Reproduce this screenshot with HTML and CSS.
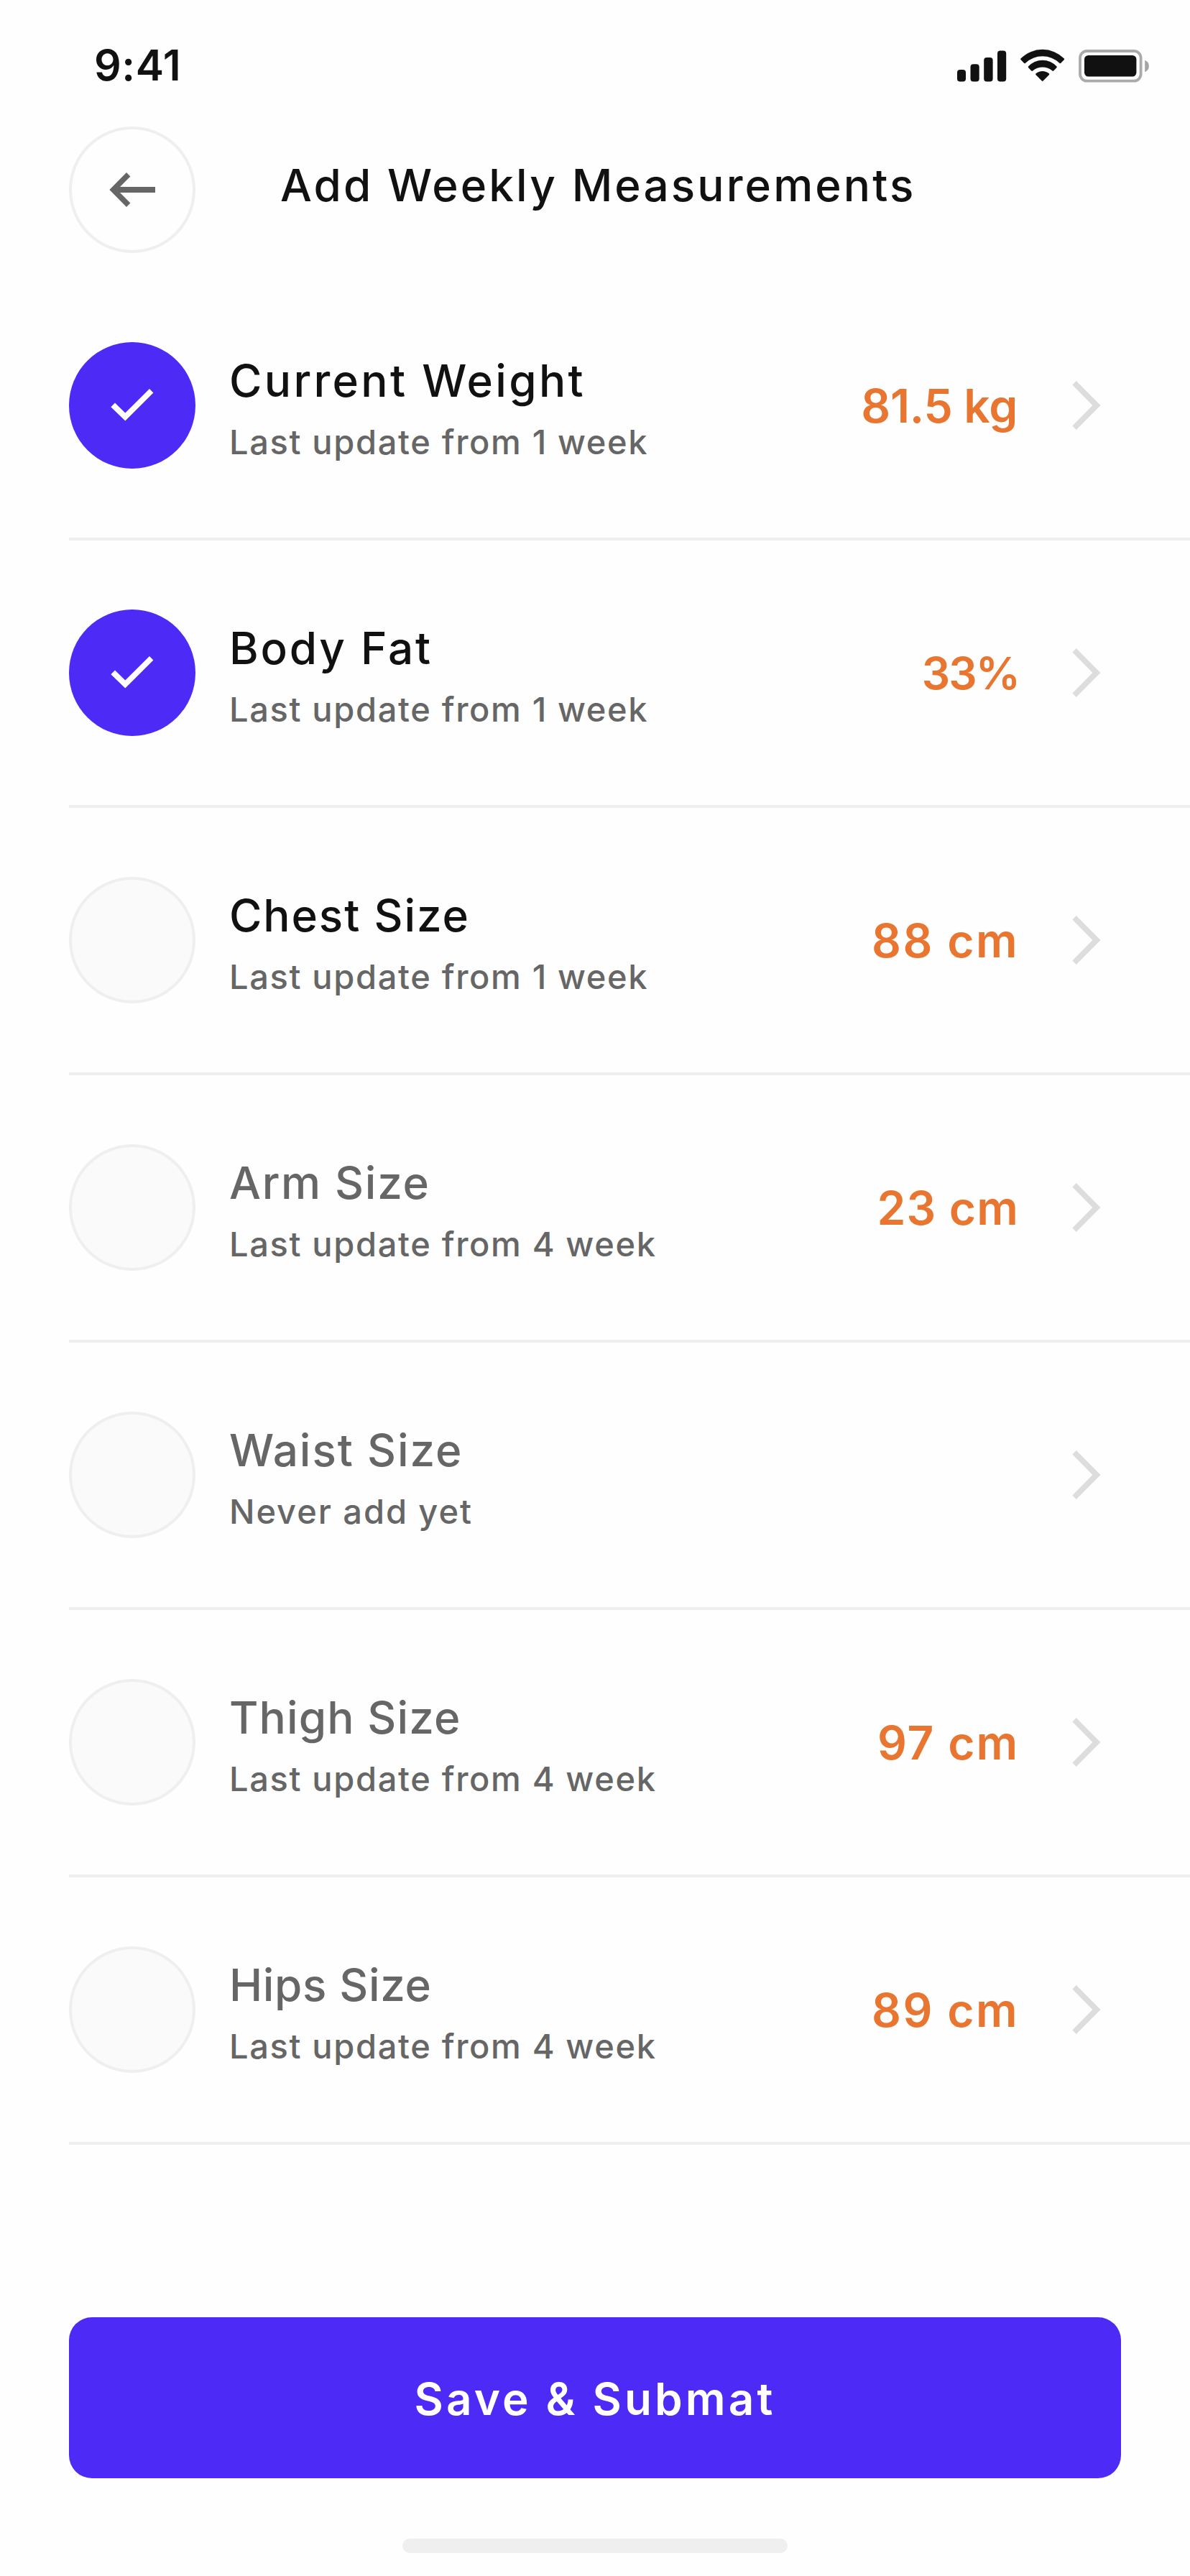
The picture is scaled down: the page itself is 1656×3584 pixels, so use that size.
FILE: index.html
```html
<!DOCTYPE html>
<html lang="en">
<head>
<meta charset="utf-8">
<title>Add Weekly Measurements</title>
<link rel="stylesheet" href="styles.css">
</head>
<body>
<svg class="sprite" aria-hidden="true">
  <symbol id="chevron" viewBox="0 0 40 68"><path d="M5.7 0 39.6 34 5.7 68 .3 62.6 28.4 34 .3 5.4z"/></symbol>
  <symbol id="check" viewBox="0 0 60 46"><path d="M.3 25.3 6 19.6 20.3 33.6 54 0 59.4 5.4 20.3 44.6z"/></symbol>
</svg>
<div class="screen">
  <div class="status">
    <span class="status__time">9:41</span>
    <svg class="status__icons" viewBox="0 0 268 48">
      <g fill="#111">
        <rect x="0" y="29" width="12" height="16.6" rx="4"/>
        <rect x="18.5" y="21.2" width="12.2" height="24.4" rx="4"/>
        <rect x="37.2" y="12" width="12.4" height="33.6" rx="4"/>
        <rect x="56" y="2.4" width="12.2" height="43.2" rx="4"/>
        <path d="M88.4 13.6Q88 14.3 88.5 15L93 19.8Q94 20.7 95 19.7A34.3 34.3 0 0 1 142.4 19.7Q143.4 20.7 144.3 19.8L148.9 15Q149.4 14.3 148.9 13.6A42.3 42.3 0 0 0 88.4 13.6z"/>
        <path d="M98.9 24.6Q98.5 25.3 99 25.9L103.3 30.6Q104.2 31.3 105.1 30.6A21.3 21.3 0 0 1 132.5 30.6Q133.3 31.3 134.2 30.6L138.5 25.9Q139 25.3 138.6 24.6A26.6 26.6 0 0 0 98.9 24.6z"/>
        <path d="M109.3 34.6Q108.9 35.3 109.4 35.9L117.8 44.6Q118.7 45.4 119.6 44.6L128 35.9Q128.5 35.3 128.1 34.6A14.3 14.3 0 0 0 109.3 34.6z"/>
        <rect x="177" y="9" width="72.4" height="29.6" rx="5.5"/>
      </g>
      <rect x="171" y="3" width="84.6" height="41.6" rx="9.5" fill="none" stroke="#aaa" stroke-width="3.8"/>
      <path d="M261.2 15.8Q266.9 18.4 266.9 24T261.2 32.2z" fill="#a5a5a5"/>
    </svg>
  </div>

  <header class="header">
    <div class="back">
      <svg class="back__icon" viewBox="0 0 64 50"><path d="M.3 25 24 1 29.4 6.4 15 21H64V29H15L29.4 43.6 24 49z"/></svg>
    </div>
    <h1 class="header__title">Add Weekly Measurements</h1>
  </header>

  <main class="list">
    <section class="row row--weight">
      <div class="mark mark--done"><svg class="mark__check"><use href="#check"/></svg></div>
      <div class="info"><h2 class="title">Current Weight</h2><p class="note">Last update from 1 week</p></div>
      <span class="value">81.5 kg</span>
      <svg class="chevron"><use href="#chevron"/></svg>
    </section>
    <section class="row row--fat">
      <div class="mark mark--done"><svg class="mark__check"><use href="#check"/></svg></div>
      <div class="info"><h2 class="title">Body Fat</h2><p class="note">Last update from 1 week</p></div>
      <span class="value">33%</span>
      <svg class="chevron"><use href="#chevron"/></svg>
    </section>
    <section class="row row--chest">
      <div class="mark"></div>
      <div class="info"><h2 class="title">Chest Size</h2><p class="note">Last update from 1 week</p></div>
      <span class="value">88 cm</span>
      <svg class="chevron"><use href="#chevron"/></svg>
    </section>
    <section class="row row--muted row--arm">
      <div class="mark"></div>
      <div class="info"><h2 class="title">Arm Size</h2><p class="note">Last update from 4 week</p></div>
      <span class="value">23 cm</span>
      <svg class="chevron"><use href="#chevron"/></svg>
    </section>
    <section class="row row--muted row--waist">
      <div class="mark"></div>
      <div class="info"><h2 class="title">Waist Size</h2><p class="note">Never add yet</p></div>
      <svg class="chevron"><use href="#chevron"/></svg>
    </section>
    <section class="row row--muted row--thigh">
      <div class="mark"></div>
      <div class="info"><h2 class="title">Thigh Size</h2><p class="note">Last update from 4 week</p></div>
      <span class="value">97 cm</span>
      <svg class="chevron"><use href="#chevron"/></svg>
    </section>
    <section class="row row--muted row--hips">
      <div class="mark"></div>
      <div class="info"><h2 class="title">Hips Size</h2><p class="note">Last update from 4 week</p></div>
      <span class="value">89 cm</span>
      <svg class="chevron"><use href="#chevron"/></svg>
    </section>
  </main>

  <button class="submit" type="button">Save &amp; Submat</button>
  <div class="home"></div>
</div>
</body>
</html>
```
FILE: styles.css
```css
* { box-sizing: border-box; margin: 0; padding: 0; }

body {
  background: #fefefe;
  color: #111;
  font-family: Inter, "Liberation Sans", sans-serif;
}

.sprite { display: none; }

.screen {
  display: flex;
  flex-direction: column;
  width: 1656px;
  height: 3584px;
  overflow: hidden;
}

/* Status bar */
.status {
  display: flex;
  justify-content: space-between;
  align-items: flex-start;
  height: 176px;
  padding: 55px 56px 0 131px;
}
.status__time {
  font-size: 59px;
  font-weight: 600;
  line-height: 71px;
  letter-spacing: 0.58px;
}
.status__icons { width: 268px; height: 48px; margin-top: 13px; }

/* Header */
.header {
  display: flex;
  align-items: flex-start;
  gap: 118px;
  height: 204px;
  padding-left: 96px;
}
.back {
  display: flex;
  align-items: center;
  justify-content: center;
  width: 176px;
  height: 176px;
  border: 4px solid #efefef;
  border-radius: 50%;
}
.back__icon { width: 64px; height: 50px; fill: #666; }
.header__title {
  margin-top: 34px;
  font-size: 62px;
  font-weight: 500;
  line-height: 95px;
  letter-spacing: 3.11px;
  white-space: nowrap;
}

/* Measurements */
.list { padding-left: 96px; }
.row {
  display: flex;
  align-items: center;
  height: 372px;
  padding: 96px 124px 96px 0;
  border-bottom: 4px solid #efefef;
}
.mark {
  display: flex;
  align-items: center;
  justify-content: center;
  flex: none;
  width: 176px;
  height: 176px;
  border: 4px solid #efefef;
  border-radius: 50%;
  background: #fafafa;
}
.mark--done { border: 0; background: #4d2af5; }
.mark__check { width: 60px; height: 46px; fill: #fff; }
.info {
  flex: 1;
  align-self: flex-start;
  padding: 6px 0 0 47px;
  white-space: nowrap;
}
.title {
  font-size: 62px;
  font-weight: 500;
  line-height: 95px;
}
.row--muted .title { color: #666; }
.note {
  margin-top: 2px;
  color: #666;
  font-size: 47px;
  font-weight: 500;
  line-height: 71px;
  letter-spacing: 1.65px;
}
.value {
  padding-top: 1px;
  color: #e87630;
  font-size: 64px;
  font-weight: 600;
  line-height: 97px;
  letter-spacing: 2.4px;
  white-space: nowrap;
}
.chevron {
  flex: none;
  width: 40px;
  height: 68px;
  margin-left: 74px;
  fill: #ddd;
}

/* Tracking per entry */
.row--weight .title { letter-spacing: 3.31px; }
.row--weight .value { margin-right: 2px; letter-spacing: -0.2px; }
.row--fat .title { letter-spacing: 2.8px; }
.row--fat .value { font-size: 62px; letter-spacing: -2px; }
.row--chest .title { letter-spacing: 1.89px; }
.row--arm .title { letter-spacing: 1.7px; }
.row--arm .value { letter-spacing: 1.2px; }
.row--waist .title { letter-spacing: 1.89px; }
.row--waist .note { letter-spacing: 1.93px; }
.row--thigh .title { letter-spacing: 1.12px; }
.row--thigh .value { letter-spacing: 1.88px; }
.row--hips .title { letter-spacing: 0.64px; }

/* Footer */
.submit {
  flex: none;
  width: 1464px;
  height: 224px;
  margin: 240px 0 84px 96px;
  padding: 66px 0 63px;
  border: 0;
  border-radius: 32px;
  background: #4d2af5;
  color: #fff;
  font-family: inherit;
  font-size: 62px;
  font-weight: 600;
  line-height: 95px;
  letter-spacing: 4.12px;
}
.home {
  align-self: center;
  width: 536px;
  height: 20px;
  border-radius: 10px;
  background: #efefef;
}
```
